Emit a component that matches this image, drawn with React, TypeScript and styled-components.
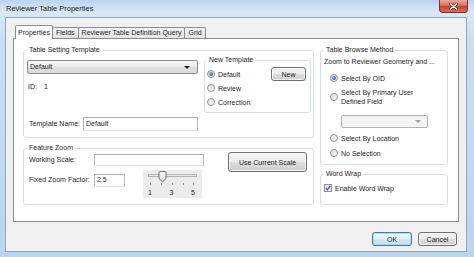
import styled, { createGlobalStyle } from 'styled-components';

const GlobalStyle = createGlobalStyle`
  html, body {
    margin: 0;
    padding: 0;
  }
  body {
    width: 474px;
    height: 257px;
    overflow: hidden;
    font-family: 'Liberation Sans', Arial, sans-serif;
    color: #1e1e1e;
  }
`;

const Window = styled.div`
  width: 474px;
  height: 257px;
  box-sizing: border-box;
  display: flex;
  flex-direction: column;
  background: linear-gradient(to bottom, #bcd4ee 0px, #d9e7f6 12px, #cbdef2 40px, #bdd4ed 100%);
`;

const TitleBar = styled.div`
  height: 17px;
  flex-shrink: 0;
  display: flex;
  justify-content: space-between;
  align-items: flex-start;
`;

const Title = styled.span`
  padding-left: 6px;
  font-size: 7.5px;
  line-height: 17px;
  color: #1b1b1b;
`;

const CloseButton = styled.div`
  width: 29px;
  height: 13px;
  margin-right: 6px;
  box-sizing: border-box;
  border: 1px solid #7a3326;
  border-top: none;
  border-radius: 0 0 4px 4px;
  background: linear-gradient(to bottom, #e9a99b 0%, #d7705d 45%, #c5432b 55%, #d5735c 100%);
  display: flex;
  align-items: center;
  justify-content: center;
`;

const Client = styled.div`
  flex: 1;
  margin: 0 7px 5px 5px;
  box-sizing: border-box;
  background: #f0f0f0;
  border: 1px solid #8ea6c3;
  padding: 7px 7px 5px 7px;
  display: flex;
  flex-direction: column;
`;

const TabStrip = styled.div`
  height: 13px;
  display: flex;
  align-items: flex-end;
  padding-left: 2px;
  position: relative;
  z-index: 1;
`;

const Tab = styled.div<{ $active?: boolean }>`
  box-sizing: border-box;
  height: ${(p) => (p.$active ? '14px' : '11px')};
  margin-bottom: ${(p) => (p.$active ? '-1px' : '0')};
  padding: 0 ${(p) => (p.$active ? '2px' : '3px')};
  border: 1px solid #898c95;
  border-bottom: none;
  border-radius: 2px 2px 0 0;
  background: ${(p) => (p.$active ? '#ffffff' : 'linear-gradient(to bottom, #f4f4f4, #e3e3e3)')};
  font-size: 7px;
  line-height: 10px;
  white-space: nowrap;
  display: flex;
  align-items: center;
  & + & {
    margin-left: -1px;
  }
`;

const Panel = styled.div`
  height: 184px;
  flex-shrink: 0;
  box-sizing: border-box;
  border: 1px solid #898c95;
  background: #ffffff;
  padding: 6px 10px 0 9px;
  display: grid;
  grid-template-columns: 291px 128px;
  column-gap: 6px;
  align-items: start;
`;

const Column = styled.div<{ $gap: number }>`
  display: flex;
  flex-direction: column;
  gap: ${(p) => p.$gap}px;
`;

const Group = styled.fieldset`
  margin: 0;
  min-width: 0;
  border: 1px solid #d5dfe5;
  border-radius: 3px;
  padding: 0 2px 6px 3px;
`;

const Legend = styled.legend`
  padding: 0 2px;
  font-size: 7px;
  line-height: 10px;
  white-space: nowrap;
`;

const TemplateGrid = styled.div`
  display: grid;
  grid-template-columns: 171px 107px;
  column-gap: 6px;
  align-items: start;
`;

const TemplateLeft = styled.div`
  padding-top: 5px;
  display: flex;
  flex-direction: column;
`;

const Combo = styled.div<{ $disabled?: boolean }>`
  box-sizing: border-box;
  height: 14px;
  border: 1px solid ${(p) => (p.$disabled ? '#aeb2b5' : '#8a8b8c')};
  border-radius: 2px;
  background: ${(p) =>
    p.$disabled ? '#f4f4f4' : 'linear-gradient(to bottom, #f6f6f6 0%, #ececec 50%, #e0e0e0 51%, #d9d9d9 100%)'};
  padding: 0 7px 0 2px;
  font-size: 7px;
  line-height: 12px;
  display: flex;
  align-items: center;
  &::after {
    content: '';
    margin-left: auto;
    border-left: 3px solid transparent;
    border-right: 3px solid transparent;
    border-top: 3px solid ${(p) => (p.$disabled ? '#a0a0a0' : '#1e1e1e')};
  }
`;

const SmallCombo = styled(Combo)`
  width: 87px;
  height: 13px;
  margin: 9px 0 0 17px;
  padding-right: 6px;
`;

const IdRow = styled.div`
  margin-top: 8px;
  padding-left: 1px;
  font-size: 7px;
  line-height: 10px;
  display: flex;
  gap: 7px;
`;

const FieldRow = styled.div`
  margin-top: 25px;
  height: 14px;
  display: flex;
  align-items: center;
`;

const Label = styled.span<{ $width?: number; $top?: number }>`
  width: ${(p) => (p.$width ? `${p.$width}px` : 'auto')};
  flex-shrink: 0;
  padding-left: 2px;
  box-sizing: border-box;
  margin-top: ${(p) => p.$top ?? 0}px;
  font-size: 7px;
  line-height: 10px;
  white-space: nowrap;
  align-self: ${(p) => (p.$top ? 'start' : 'center')};
`;

const TextBox = styled.div<{ $width?: number; $height: number; $top?: number }>`
  box-sizing: border-box;
  width: ${(p) => (p.$width ? `${p.$width}px` : '100%')};
  height: ${(p) => p.$height}px;
  margin-top: ${(p) => p.$top ?? 0}px;
  flex: ${(p) => (p.$width ? 'none' : '1')};
  border: 1px solid #b5b9c0;
  border-top-color: #abadb3;
  border-bottom-color: #dfe3e8;
  background: #ffffff;
  padding: 0 2px;
  font-size: 7px;
  line-height: ${(p) => p.$height - 3}px;
  white-space: nowrap;
`;

const NewTemplateGroup = styled(Group)`
  padding: 2px 4px 3px 2px;
`;

const NewTemplateBody = styled.div`
  display: flex;
  justify-content: space-between;
  align-items: flex-start;
`;

const RadioList = styled.div`
  display: flex;
  flex-direction: column;
`;

const OptionRow = styled.div<{ $height?: number; $top?: number; $indent?: number }>`
  height: ${(p) => p.$height ?? 14}px;
  margin-top: ${(p) => p.$top ?? 0}px;
  padding-left: ${(p) => p.$indent ?? 0}px;
  display: flex;
  align-items: center;
  gap: 3px;
  font-size: 7px;
  line-height: 9px;
  white-space: nowrap;
`;

const Radio = styled.span<{ $checked?: boolean }>`
  width: 8px;
  height: 8px;
  flex-shrink: 0;
  box-sizing: border-box;
  border-radius: 50%;
  border: 1px solid #8e9296;
  background: linear-gradient(to bottom right, #dcdcdc, #fafafa);
  display: flex;
  align-items: center;
  justify-content: center;
  &::after {
    content: '';
    display: ${(p) => (p.$checked ? 'block' : 'none')};
    width: 4px;
    height: 4px;
    border-radius: 50%;
    background: radial-gradient(circle at 35% 35%, #8fc3ef, #2a62a2 70%, #1b4a80);
  }
`;

const CheckBox = styled.span`
  width: 8px;
  height: 8px;
  flex-shrink: 0;
  box-sizing: border-box;
  border: 1px solid #8e9296;
  background: linear-gradient(to bottom right, #dcdcdc, #fafafa);
  display: flex;
  align-items: center;
  justify-content: center;
`;

const Button = styled.button<{ $w: number; $h: number; $default?: boolean }>`
  width: ${(p) => p.$w}px;
  height: ${(p) => p.$h}px;
  box-sizing: border-box;
  padding: 0;
  flex-shrink: 0;
  font-family: 'Liberation Sans', Arial, sans-serif;
  font-size: 7px;
  color: #1e1e1e;
  border: 1px solid ${(p) => (p.$default ? '#3c7fb1' : '#707070')};
  border-radius: 3px;
  background: ${(p) =>
    p.$default
      ? 'linear-gradient(to bottom, #f1f8fd 0%, #e3f0f9 50%, #d3e7f5 51%, #c9e1f2 100%)'
      : 'linear-gradient(to bottom, #f2f2f2 0%, #ebebeb 50%, #dddddd 51%, #cfcfcf 100%)'};
  box-shadow: inset 0 0 0 1px ${(p) => (p.$default ? 'rgba(160, 215, 245, 0.9)' : 'rgba(255, 255, 255, 0.7)')};
`;

const ZoomGroup = styled(Group)`
  padding: 0 6px 6px 3px;
`;

const ZoomGrid = styled.div`
  display: grid;
  grid-template-columns: 67px 110px 1fr;
  grid-template-rows: 12px 28px;
  row-gap: 4px;
  margin-top: 1px;
`;

const ScaleButton = styled(Button)`
  grid-column: 3;
  grid-row: 1 / span 2;
  justify-self: end;
  align-self: start;
  margin-top: -2px;
`;

const ZoomCell = styled.div`
  display: flex;
  align-items: flex-start;
`;

const Slider = styled.div`
  width: 59px;
  height: 28px;
  margin-left: 18px;
  background: #ececec;
  display: flex;
  flex-direction: column;
`;

const TickLabels = styled.div`
  display: flex;
  justify-content: space-between;
  padding: 0 7px 0 5px;
  font-size: 7px;
  line-height: 10px;
`;

const BrowseBody = styled.div`
  display: flex;
  flex-direction: column;
  align-items: flex-start;
`;

const Note = styled.div`
  margin-top: 2px;
  font-size: 7px;
  line-height: 10px;
  white-space: nowrap;
`;

const WrapGroup = styled(Group)`
  padding: 4px 2px 11px 3px;
`;

const Footer = styled.div`
  margin-top: 10px;
  padding-right: 2px;
  display: flex;
  justify-content: flex-end;
  gap: 6px;
`;

function TrackBar() {
  const ticks = [7, 18, 29, 40, 50];
  return (
    <Slider>
      <svg width="59" height="18" viewBox="0 0 59 18">
        <defs>
          <linearGradient id="thumb" x1="0" y1="0" x2="0" y2="1">
            <stop offset="0" stopColor="#fbfbfb" />
            <stop offset="1" stopColor="#d6d6d6" />
          </linearGradient>
        </defs>
        <rect x="5.5" y="4.5" width="48" height="2" fill="#e7eaea" stroke="#b0b3b5" />
        {ticks.map((x) => (
          <rect key={x} x={x} y="13" width="1" height="2" fill="#8a8a8a" />
        ))}
        <path
          d="M17 1.5 H22 Q23 1.5 23 2.5 V8.5 L19.5 11.8 L16 8.5 V2.5 Q16 1.5 17 1.5 Z"
          fill="url(#thumb)"
          stroke="#6f7377"
        />
      </svg>
      <TickLabels>
        <span>1</span>
        <span>3</span>
        <span>5</span>
      </TickLabels>
    </Slider>
  );
}

export default function App() {
  return (
    <>
      <GlobalStyle />
      <Window>
        <TitleBar>
          <Title>Reviewer Table Properties</Title>
          <CloseButton>
            <svg width="9" height="7" viewBox="0 0 9 7">
              <path d="M1.5 1 L7.5 6 M7.5 1 L1.5 6" stroke="#5a1a10" strokeWidth="2.6" strokeLinecap="round" />
              <path d="M1.5 1 L7.5 6 M7.5 1 L1.5 6" stroke="#ffffff" strokeWidth="1.5" strokeLinecap="round" />
            </svg>
          </CloseButton>
        </TitleBar>
        <Client>
          <TabStrip>
            <Tab $active>Properties</Tab>
            <Tab>Fields</Tab>
            <Tab>Reviewer Table Definition Query</Tab>
            <Tab>Grid</Tab>
          </TabStrip>
          <Panel>
            <Column $gap={5}>
              <Group>
                <Legend>Table Setting Template</Legend>
                <TemplateGrid>
                  <TemplateLeft>
                    <Combo>Default</Combo>
                    <IdRow>
                      <span>ID:</span>
                      <span>1</span>
                    </IdRow>
                    <FieldRow>
                      <Label $width={56}>Template Name:</Label>
                      <TextBox $height={14}>Default</TextBox>
                    </FieldRow>
                  </TemplateLeft>
                  <NewTemplateGroup>
                    <Legend>New Template</Legend>
                    <NewTemplateBody>
                      <RadioList>
                        <OptionRow>
                          <Radio $checked />
                          Default
                        </OptionRow>
                        <OptionRow>
                          <Radio />
                          Review
                        </OptionRow>
                        <OptionRow>
                          <Radio />
                          Correction
                        </OptionRow>
                      </RadioList>
                      <Button $w={35} $h={14}>
                        New
                      </Button>
                    </NewTemplateBody>
                  </NewTemplateGroup>
                </TemplateGrid>
              </Group>
              <ZoomGroup>
                <Legend>Feature Zoom</Legend>
                <ZoomGrid>
                  <Label>Working Scale:</Label>
                  <TextBox $width={110} $height={12} />
                  <ScaleButton $w={79} $h={20}>
                    Use Current Scale
                  </ScaleButton>
                  <Label $top={5}>Fixed Zoom Factor:</Label>
                  <ZoomCell>
                    <TextBox $width={31} $height={13} $top={4}>
                      2.5
                    </TextBox>
                    <TrackBar />
                  </ZoomCell>
                </ZoomGrid>
              </ZoomGroup>
            </Column>
            <Column $gap={4}>
              <Group>
                <Legend>Table Browse Method</Legend>
                <BrowseBody>
                  <Note>Zoom to Reviewer Geometry and ...</Note>
                  <OptionRow $height={10} $top={6} $indent={6}>
                    <Radio $checked />
                    Select By OID
                  </OptionRow>
                  <OptionRow $height={18} $top={5} $indent={6}>
                    <Radio />
                    <span>
                      Select By Primary User
                      <br />
                      Defined Field
                    </span>
                  </OptionRow>
                  <SmallCombo $disabled />
                  <OptionRow $height={10} $top={5} $indent={6}>
                    <Radio />
                    Select By Location
                  </OptionRow>
                  <OptionRow $height={10} $top={5} $indent={6}>
                    <Radio />
                    No Selection
                  </OptionRow>
                </BrowseBody>
              </Group>
              <WrapGroup>
                <Legend>Word Wrap</Legend>
                <OptionRow $height={10}>
                  <CheckBox>
                    <svg width="6" height="6" viewBox="0 0 6 6">
                      <path d="M0.8 3.2 L2.4 4.8 L5.3 0.8" fill="none" stroke="#3a4f8a" strokeWidth="1.2" />
                    </svg>
                  </CheckBox>
                  Enable Word Wrap
                </OptionRow>
              </WrapGroup>
            </Column>
          </Panel>
          <Footer>
            <Button $w={40} $h={14} $default>
              OK
            </Button>
            <Button $w={39} $h={14}>
              Cancel
            </Button>
          </Footer>
        </Client>
      </Window>
    </>
  );
}
